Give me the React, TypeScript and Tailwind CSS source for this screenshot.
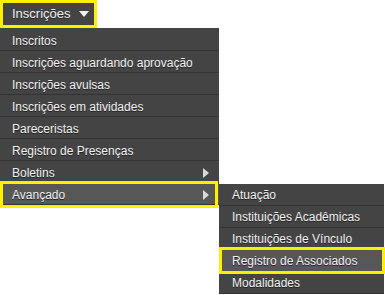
const mainItems = [
  { label: "Inscritos" },
  { label: "Inscrições aguardando aprovação" },
  { label: "Inscrições avulsas" },
  { label: "Inscrições em atividades" },
  { label: "Pareceristas" },
  { label: "Registro de Presenças" },
  { label: "Boletins", sub: true },
  { label: "Avançado", sub: true, active: true },
];

const subItems = [
  { label: "Atuação" },
  { label: "Instituições Acadêmicas" },
  { label: "Instituições de Vínculo" },
  { label: "Registro de Associados", active: true },
  { label: "Modalidades" },
];

function Arrow() {
  return (
    <svg width="6" height="10" viewBox="0 0 6 10" className="shrink-0">
      <path d="M0 0 L6 5 L0 10 Z" fill="#d8d8d8" />
    </svg>
  );
}

export default function App() {
  return (
    <div
      className="relative w-[385px] h-[295px] bg-white overflow-hidden text-[12px] text-[#f2f2f2]"
      style={{ fontFamily: "Arial, 'Liberation Sans', sans-serif" }}
    >
      {/* top button */}
      <div className="flex items-center gap-[8px] w-[97px] h-[28px] border-[3px] border-[#fff000] bg-[#444444] pl-[9px]">
        <span className="text-[13px] [text-shadow:0_1px_0_#222]">Inscrições</span>
        <svg width="10" height="6" viewBox="0 0 10 6">
          <path d="M0 0 L10 0 L5 6 Z" fill="#f2f2f2" />
        </svg>
      </div>

      {/* main dropdown */}
      <div className="w-[219px] bg-[#444444] pt-[1px]">
        {mainItems.map((it) => (
          <div
            key={it.label}
            className={
              "relative flex items-center justify-between h-[22px] pt-[2px] pl-[12px] pr-[10px] border-b border-[#333333] [text-shadow:0_1px_0_#222] " +
              (it.active ? "bg-[#575757]" : "")
            }
          >
            <span>{it.label}</span>
            {it.sub && <Arrow />}
            {it.active && (
              <div className="absolute left-0 top-[-2px] w-[218px] h-[27px] border-[3px] border-[#fff000] pointer-events-none" />
            )}
          </div>
        ))}
      </div>

      {/* flyout submenu */}
      <div className="absolute left-[219px] top-[184px] w-[165px] bg-[#444444]">
        {subItems.map((it) => (
          <div
            key={it.label}
            className={
              "relative flex items-center h-[22px] pl-[13px] border-b border-[#333333] [text-shadow:0_1px_0_#222] " +
              (it.active ? "bg-[#575757]" : "")
            }
          >
            <span>{it.label}</span>
            {it.active && (
              <div className="absolute left-0 top-[-3px] w-[166px] h-[27px] border-[3px] border-[#fff000] pointer-events-none" />
            )}
          </div>
        ))}
      </div>
    </div>
  );
}
